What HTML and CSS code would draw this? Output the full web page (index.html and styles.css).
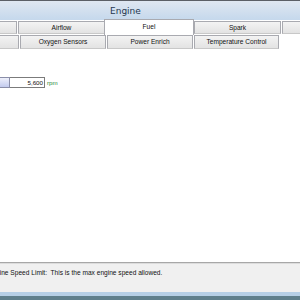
FILE: index.html
```html
<!DOCTYPE html>
<html lang="en">
<head>
	<meta charset="UTF-8">
	<title>Engine</title>
	<link rel="stylesheet" href="styles.css">
</head>
<body>
	<div class="window">
		<div class="titlebar">Engine</div>
		<div class="tabs row-1">
			<div class="tab t-edge"></div>
			<div class="tab t-a">Airflow</div>
			<div class="tab t-b active">Fuel</div>
			<div class="tab t-c">Spark</div>
			<div class="tab t-rest"></div>
		</div>
		<div class="tabs row-2">
			<div class="tab t-edge2"></div>
			<div class="tab t-d">Oxygen Sensors</div>
			<div class="tab t-e">Power Enrich</div>
			<div class="tab t-f">Temperature Control</div>
		</div>
		<div class="page">
			<div class="field">
				<div class="field-label"></div>
				<div class="field-box">5,600</div>
				<span class="unit">rpm</span>
			</div>
		</div>
		<div class="status">
			<div class="status-text">Engine Speed Limit:&nbsp; This is the max engine speed allowed.</div>
		</div>
		<div class="frame-bottom"></div>
	</div>
</body>
</html>
```

FILE: styles.css
```css
body{
	margin: 0;
	padding: 0;
	font: 6.6px "Liberation Sans", Arial, sans-serif;
	color: #111;
	overflow: hidden;
}
.window{
	display: flex;
	flex-direction: column;
	width: 300px;
	height: 300px;
	background: #fff;
	overflow: hidden;
}
.titlebar{
	flex: none;
	box-sizing: border-box;
	height: 20px;
	border-top: 1px solid #5b5f66;
	background: linear-gradient(#dfe7f1, #c5d8ec);
	padding-left: 110px;
	font: 9px "DejaVu Sans", sans-serif;
	line-height: 21px;
	color: #243650;
}
.tabs{
	display: flex;
	gap: 1px;
}
.row-1{
	height: 13px;
	margin-top: 1px;
}
.row-2{
	height: 14px;
	margin-top: 1px;
}
.tab{
	flex: none;
	box-sizing: border-box;
	border: 1px solid #a9aab0;
	border-bottom-color: #c8c8c8;
	background: linear-gradient(#f3f3f3, #e3e3e3);
	text-align: center;
	line-height: 11px;
}
.row-2 .tab{
	line-height: 12px;
}
.t-edge{
	width: 18px;
	margin-left: -1px;
}
.t-a{
	width: 87px;
}
.t-b{
	width: 90px;
}
.t-c{
	width: 87px;
}
.t-rest{
	width: 30px;
}
.tab.active{
	background: #fff;
	border-bottom: 0;
	margin: -2px -1px 0 -2px;
	height: 16px;
	line-height: 14px;
}
.t-edge2{
	width: 20px;
	margin-left: -1px;
}
.t-d{
	width: 86px;
}
.t-e{
	width: 86px;
}
.t-f{
	width: 85px;
}
.page{
	flex: 1;
	padding-top: 28px;
}
.field{
	display: flex;
	align-items: center;
	height: 11px;
}
.field-label{
	width: 10px;
	height: 11px;
	box-sizing: border-box;
	border: 1px solid #8a8ea8;
	border-left: 0;
	background: linear-gradient(#eef0fb, #c3cbee);
}
.field-box{
	width: 35px;
	height: 11px;
	box-sizing: border-box;
	border: 1px solid #7b7b7b;
	border-left: 0;
	text-align: right;
	padding-right: 1px;
	line-height: 9px;
	font-size: 6.2px;
}
.unit{
	margin-left: 2px;
	color: #2e8b3a;
	font-size: 6.2px;
}
.status{
	flex: none;
	height: 29px;
	border-top: 1px solid #a7a7a7;
	box-shadow: inset 0 1px 0 #dcdcdc;
	background: #f0f0f0;
	overflow: hidden;
}
.status-text{
	margin-top: 6px;
	margin-left: -12px;
	white-space: nowrap;
}
.frame-bottom{
	flex: none;
	height: 4px;
	background: #b6cfe6;
	border-bottom: 4px solid #5f7f8c;
}
```
